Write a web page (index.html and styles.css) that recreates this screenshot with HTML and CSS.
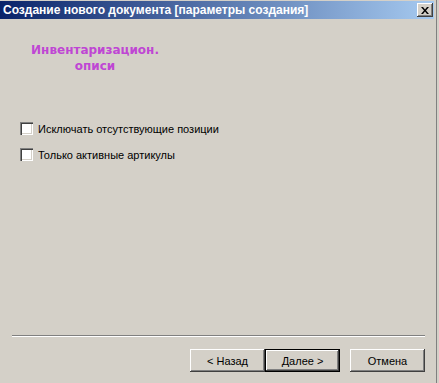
FILE: index.html
```html
<!DOCTYPE html>
<html lang="ru">
<head>
  <meta charset="UTF-8">
  <title>Создание нового документа</title>
  <link rel="stylesheet" href="styles.css">
</head>
<body>
  <div class="window">
    <div class="titlebar">
      <span class="title">Создание нового документа [параметры создания]</span>
      <button type="button" class="close-btn" aria-label="Закрыть">
        <svg width="8" height="7" viewBox="0 0 8 7">
          <path d="M0 0h2l2 2.5 2-2.5h2L5 3.5 8 7H6L4 4.5 2 7H0l3-3.5z" fill="#000"/>
        </svg>
      </button>
    </div>
    <div class="content">
      <div class="doc-type">Инвентаризацион.<br>описи</div>
      <div class="options">
        <label class="option"><input type="checkbox" class="check">Исключать отсутствующие позиции</label>
        <label class="option"><input type="checkbox" class="check">Только активные артикулы</label>
      </div>
    </div>
    <div class="footer">
      <div class="separator"></div>
      <div class="buttons">
        <button type="button" class="btn">&lt; Назад</button>
        <button type="button" class="btn btn-default">Далее &gt;</button>
        <button type="button" class="btn btn-cancel">Отмена</button>
      </div>
    </div>
  </div>
</body>
</html>
```

FILE: styles.css
```css
/* Общие стили */
body {
  margin: 0;
  background: #d4d0c8;
  font-family: 'Liberation Sans', Arial, sans-serif;
  font-size: 11px;
  color: #000;
}
.window {
  width: 437px;
  height: 383px;
  border-right: 1px solid #808080;
  display: flex;
  flex-direction: column;
  box-sizing: border-box;
}
/* Заголовок окна */
.titlebar {
  height: 18px;
  margin: 1px 2px 0 0;
  padding: 0 1px 0 3px;
  background: linear-gradient(to right, #0a246a, #a6caf0);
  display: flex;
  align-items: center;
  justify-content: space-between;
}
.title {
  color: #fff;
  font-weight: bold;
  font-size: 12px;
  white-space: nowrap;
}
.close-btn {
  width: 16px;
  height: 14px;
  padding: 0;
  border: none;
  background: #d4d0c8;
  display: flex;
  align-items: center;
  justify-content: center;
  box-shadow: inset -1px -1px #404040, inset 1px 1px #fff, inset -2px -2px #808080;
}
/* Основная часть */
.content {
  flex: 1;
}
.doc-type {
  width: 150px;
  margin: 23px 0 0 20px;
  text-align: center;
  font-family: 'DejaVu Sans', sans-serif;
  font-weight: bold;
  font-size: 12px;
  line-height: 16px;
  color: #bf46d4;
}
.options {
  margin: 48px 0 0 20px;
}
.option {
  display: flex;
  align-items: center;
  height: 13px;
  margin-bottom: 13px;
  white-space: nowrap;
}
.check {
  appearance: none;
  -webkit-appearance: none;
  width: 13px;
  height: 13px;
  margin: 0 5px 0 0;
  background: #fff;
  box-shadow: inset 1px 1px #808080, inset 2px 2px #404040, inset -1px -1px #fff, inset -2px -2px #d4d0c8;
}
/* Нижняя панель с кнопками */
.footer {
  height: 48px;
  padding: 0 11px 0 12px;
}
.separator {
  height: 1px;
  background: #808080;
  border-bottom: 1px solid #fff;
}
.buttons {
  display: flex;
  justify-content: flex-end;
  margin-top: 12px;
}
.btn {
  width: 75px;
  height: 23px;
  padding: 0;
  border: none;
  background: #d4d0c8;
  font-family: 'Liberation Sans', Arial, sans-serif;
  font-size: 11px;
  color: #000;
  box-shadow: inset -1px -1px #404040, inset 1px 1px #fff, inset -2px -2px #808080;
}
.btn-default {
  box-shadow: inset 0 0 0 1px #000, inset -2px -2px #404040, inset 2px 2px #fff, inset -3px -3px #808080;
}
.btn-cancel {
  margin-left: 10px;
}
```
